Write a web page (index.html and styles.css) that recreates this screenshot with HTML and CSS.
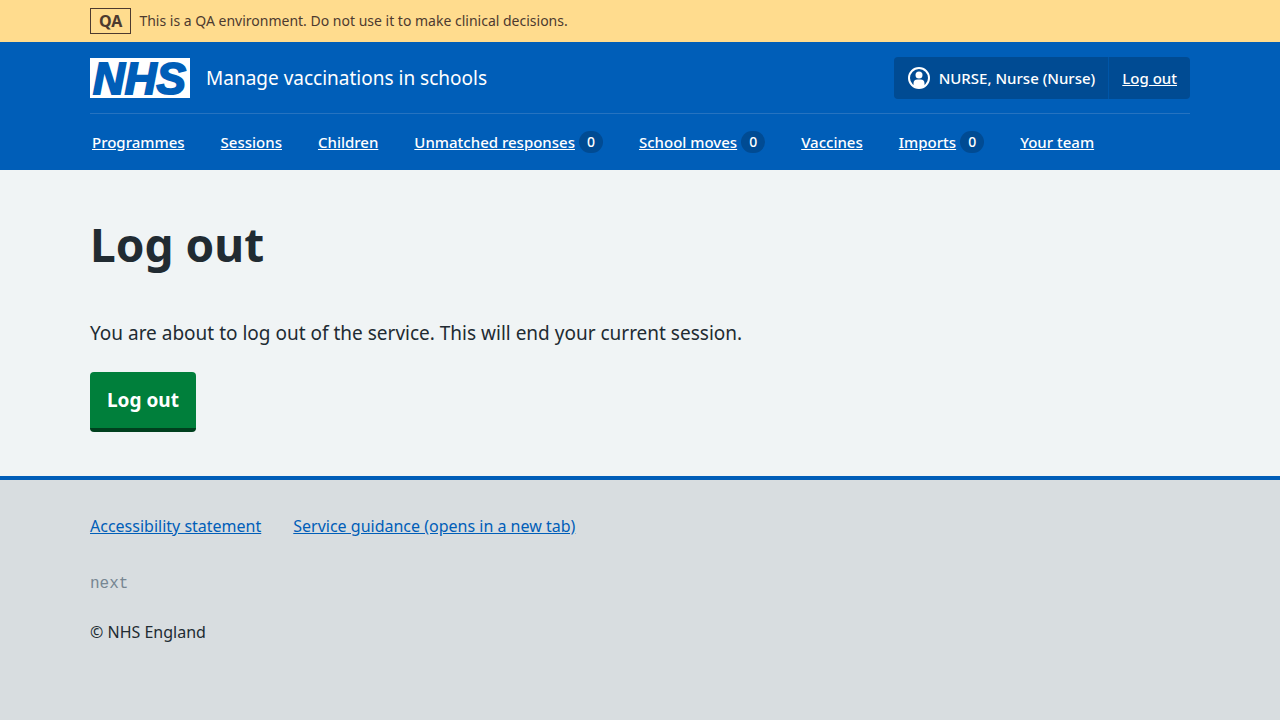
FILE: index.html
```html
<!DOCTYPE html>
<html lang="en">
<head>
<meta charset="utf-8">
<meta name="viewport" content="width=device-width, initial-scale=1">
<title>Log out - Manage vaccinations in schools</title>
<link rel="stylesheet" href="styles.css">
</head>
<body>
<div class="environment">
  <div class="container environment-inner">
    <strong class="tag">QA</strong>
    <span>This is a QA environment. Do not use it to make clinical decisions.</span>
  </div>
</div>
<header class="header">
  <div class="container">
    <div class="header-top">
      <a class="service" href="#">
        <svg class="logo" viewBox="0 0 100 40" width="100" height="40" role="img" aria-label="NHS">
          <rect width="100" height="40" fill="#fff"/>
          <text class="logo-text" x="3" y="36">NHS</text>
        </svg>
        <span>Manage vaccinations in schools</span>
      </a>
      <div class="account">
        <span class="account-item">
          <svg viewBox="0 0 24 24" width="24" height="24" aria-hidden="true">
            <circle cx="12" cy="12" r="10" fill="none" stroke="#fff" stroke-width="2"/>
            <circle cx="12" cy="9" r="3.5" fill="#fff"/>
            <path d="M6.5 20v-2.5a4 4 0 0 1 4-4h3a4 4 0 0 1 4 4V20a10 10 0 0 1-11 0Z" fill="#fff"/>
          </svg>
          NURSE, Nurse (Nurse)
        </span>
        <a class="account-item account-link" href="#">Log out</a>
      </div>
    </div>
    <nav class="nav" aria-label="Menu">
      <div class="nav-item"><a href="#">Programmes</a></div>
      <div class="nav-item"><a href="#">Sessions</a></div>
      <div class="nav-item"><a href="#">Children</a></div>
      <div class="nav-item"><a href="#">Unmatched responses</a><span class="count">0</span></div>
      <div class="nav-item"><a href="#">School moves</a><span class="count">0</span></div>
      <div class="nav-item"><a href="#">Vaccines</a></div>
      <div class="nav-item"><a href="#">Imports</a><span class="count">0</span></div>
      <div class="nav-item"><a href="#">Your team</a></div>
    </nav>
  </div>
</header>
<main class="container main">
  <h1 class="title">Log out</h1>
  <p class="lead">You are about to log out of the service. This will end your current session.</p>
  <button class="button" type="button">Log out</button>
</main>
<footer class="footer">
  <div class="container">
    <div class="footer-links">
      <a href="#">Accessibility statement</a>
      <a href="#">Service guidance (opens in a new tab)</a>
    </div>
    <p class="version">next</p>
    <p class="copyright">© NHS England</p>
  </div>
</footer>
</body>
</html>
```
FILE: styles.css
```css
* { box-sizing: border-box; }
body {
  margin: 0;
  min-height: 100vh;
  display: flex;
  flex-direction: column;
  background: #f0f4f5;
  color: #212b32;
  font-family: "Noto Sans", sans-serif;
  font-size: 16px;
  font-weight: 400;
  line-height: 24px;
}
.container { width: calc(100% - 32px); max-width: 1100px; margin: 0 auto; }
.environment { background: #ffdc8e; color: #4d3a2f; font-size: 14px; }
.environment-inner { display: flex; align-items: center; gap: 8px; padding: 8px 0; }
.tag { border: 1px solid #4d3a2f; padding: 0 8px; font-size: 16px; }
.header { background: #005eb8; color: #fff; }
.header a { color: #fff; }
.header-top {
  display: flex;
  flex-wrap: wrap;
  align-items: center;
  justify-content: space-between;
  padding: 15px 0 14px;
  border-bottom: 1px solid #2673c0;
}
.service { display: flex; align-items: center; gap: 16px; font-size: 19px; text-decoration: none; }
.logo { display: block; overflow: visible; }
.logo-text {
  font: italic bold 44px/40px "Liberation Sans", sans-serif;
  fill: #005eb8;
  stroke: #005eb8;
  stroke-width: 2px;
}
.account { display: flex; background: #004b93; border-radius: 4px; font-size: 15px; font-weight: 500; }
.account-item { display: flex; align-items: center; gap: 8px; padding: 9px 13px; }
.account-link { border-left: 1px solid #0056a8; }
.nav { display: flex; flex-wrap: wrap; gap: 0 36px; padding: 16px 2px; font-size: 15px; font-weight: 500; }
.nav-item { display: flex; align-items: center; gap: 4px; }
.count {
  background: #004b93;
  border-radius: 12px;
  padding: 0 8px;
  font-size: 14px;
  line-height: 22px;
}
.main { padding: 47px 0 44px; }
.title { margin: 0 0 48px; font-size: 46px; line-height: 54px; }
.lead { margin: 0 0 25px; font-size: 19px; line-height: 28px; }
.button {
  display: block;
  padding: 14px 17px;
  border: 0;
  border-radius: 4px;
  border-bottom: 4px solid #00401e;
  background: #007f3b;
  color: #fff;
  font: bold 19px/28px "Noto Sans", sans-serif;
}
.footer { flex: 1; border-top: 4px solid #005eb8; background: #d8dde0; padding: 34px 0; }
.footer-links { display: flex; flex-wrap: wrap; gap: 8px 32px; }
.footer a { color: #005eb8; }
.version { margin: 34px 0 24px; color: #768692; font-family: "Liberation Mono", monospace; }
.copyright { margin: 0; }
```
